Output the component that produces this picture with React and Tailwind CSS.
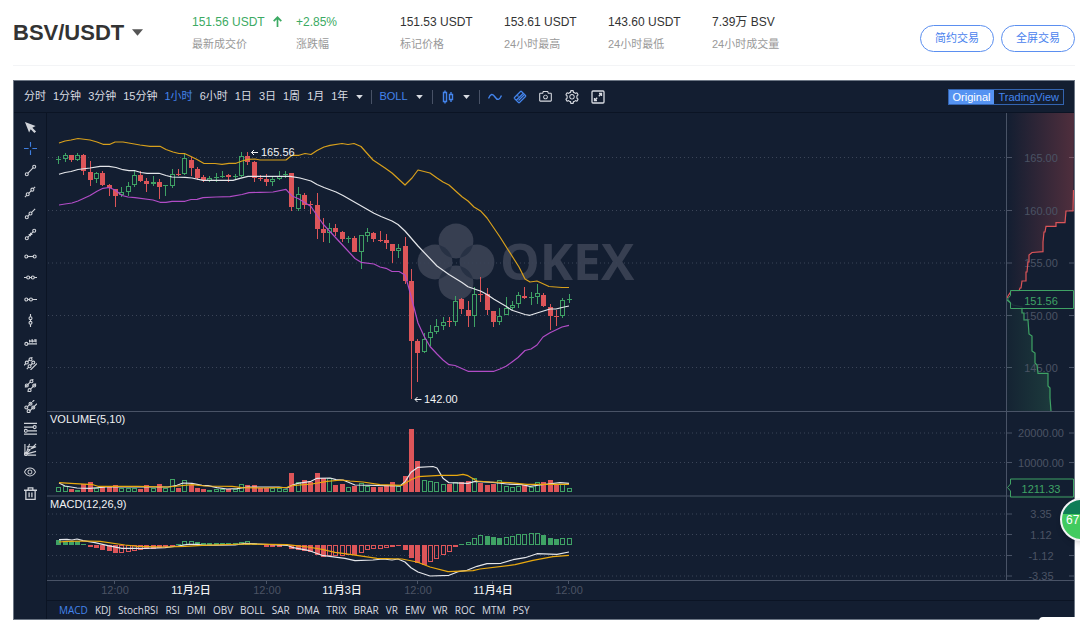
import clsx from 'clsx';
import { AiOutlineCamera, AiOutlineEye, AiOutlineSetting } from 'react-icons/ai';

const stats = [
  { label: '最新成交价', value: '151.56 USDT', up: true, arrow: true },
  { label: '涨跌幅', value: '+2.85%', up: true },
  { label: '标记价格', value: '151.53 USDT' },
  { label: '24小时最高', value: '153.61 USDT' },
  { label: '24小时最低', value: '143.60 USDT' },
  { label: '24小时成交量', value: '7.39万 BSV' },
];

const periods = ['分时', '1分钟', '3分钟', '15分钟', '1小时', '6小时', '1日', '3日', '1周', '1月', '1年'];

const indicators = [
  'MACD', 'KDJ', 'StochRSI', 'RSI', 'DMI', 'OBV', 'BOLL', 'SAR', 'DMA',
  'TRIX', 'BRAR', 'VR', 'EMV', 'WR', 'ROC', 'MTM', 'PSY',
];

const GREEN = '#3fa265';
const RED = '#dd5559';
const AMBER = '#d8a01c';
const PURPLE = '#b14cc6';
const GRID = '#3b4558';
const LINE = '#495366';

// [up, high, body top, body bottom, low]
const candles = [
  [1, 156, 159, 160, 164], [1, 153, 155, 159, 162], [0, 155, 155, 160, 162], [1, 153, 155, 160, 161],
  [0, 154, 155, 171, 175], [0, 161, 172, 180, 186], [1, 172, 173, 179, 183], [0, 171, 173, 185, 186],
  [0, 184, 185, 188, 196], [0, 189, 189, 196, 207], [1, 187, 192, 195, 197], [1, 182, 186, 192, 196],
  [1, 171, 175, 185, 187], [0, 171, 175, 181, 182], [0, 178, 181, 184, 192], [1, 176, 182, 184, 186],
  [0, 179, 182, 187, 199], [1, 185, 185, 186, 196], [1, 169, 174, 186, 188], [0, 169, 174, 175, 176],
  [1, 154, 158, 174, 175], [0, 157, 160, 168, 176], [0, 167, 169, 178, 180], [0, 175, 177, 180, 182],
  [1, 176, 178, 181, 182], [1, 173, 177, 178, 182], [1, 171, 176, 177, 178], [0, 174, 175, 177, 182],
  [1, 174, 176, 177, 179], [1, 152, 156, 176, 177], [0, 152, 156, 162, 165], [0, 161, 162, 178, 182],
  [0, 175, 178, 179, 181], [0, 174, 179, 182, 186], [1, 176, 179, 182, 186], [1, 171, 176, 179, 180],
  [1, 171, 174, 175, 178], [0, 173, 173, 207, 211], [1, 187, 194, 209, 211], [0, 193, 195, 205, 209],
  [0, 201, 204, 205, 214], [0, 193, 205, 229, 239], [0, 218, 229, 233, 242], [1, 223, 228, 233, 243],
  [0, 224, 228, 232, 236], [0, 231, 232, 239, 242], [1, 236, 238, 239, 243], [0, 236, 238, 252, 252],
  [1, 235, 235, 252, 269], [1, 228, 232, 236, 242], [0, 232, 233, 239, 242], [0, 231, 240, 241, 242],
  [0, 234, 240, 243, 249], [0, 244, 244, 251, 263], [1, 244, 248, 251, 258], [0, 237, 246, 281, 284],
  [0, 269, 281, 341, 399], [0, 339, 341, 353, 382], [1, 333, 339, 352, 353], [1, 325, 332, 338, 346],
  [1, 319, 326, 332, 334], [1, 317, 322, 326, 330], [0, 317, 321, 322, 327], [1, 296, 301, 322, 326],
  [0, 298, 299, 309, 314], [0, 301, 310, 316, 327], [1, 287, 294, 316, 327], [0, 277, 294, 295, 302],
  [0, 288, 294, 310, 315], [0, 311, 311, 322, 327], [1, 308, 316, 322, 325], [1, 297, 308, 315, 315],
  [1, 301, 305, 308, 310], [1, 292, 295, 304, 308], [0, 287, 296, 298, 299], [1, 292, 297, 298, 305],
  [1, 284, 293, 297, 304], [0, 293, 295, 306, 307], [0, 304, 307, 316, 330], [0, 310, 316, 317, 326],
  [1, 298, 300, 316, 318], [1, 294, 299, 300, 303],
];

// [up, height]
const volumes = [
  [1, 5], [1, 6], [0, 3], [1, 2], [0, 8], [0, 10], [1, 4], [0, 5], [0, 5], [0, 7], [1, 4], [1, 4], [1, 4],
  [0, 3], [0, 7], [1, 4], [0, 8], [1, 4], [1, 13], [0, 4], [1, 12], [0, 7], [0, 4], [0, 3], [1, 2], [1, 3],
  [1, 3], [0, 3], [1, 3], [1, 8], [0, 7], [0, 7], [0, 4], [0, 4], [1, 4], [1, 4], [1, 3], [0, 19], [1, 10],
  [0, 12], [0, 10], [0, 19], [0, 14], [1, 14], [0, 7], [0, 8], [1, 5], [0, 6], [1, 9], [1, 6], [0, 5],
  [0, 5], [0, 7], [0, 10], [1, 6], [0, 16], [0, 63], [0, 31], [1, 12], [1, 11], [1, 10], [1, 8], [0, 8],
  [1, 10], [0, 10], [0, 11], [1, 14], [0, 9], [0, 7], [0, 8], [1, 12], [1, 6], [1, 5], [1, 6], [0, 7],
  [1, 5], [1, 10], [0, 10], [0, 12], [0, 8], [1, 8], [1, 4],
];

// [value, filled]
const macd = [
  [5, 1], [4, 1], [4, 1], [4, 1], [1, 1], [-2, 1], [-3, 1], [-5, 1], [-6, 1], [-8, 1], [-8, 0], [-7, 0],
  [-6, 0], [-5, 0], [-4, 1], [-4, 1], [-3, 1], [-2, 0], [-1, 1], [1, 1], [4, 0], [4, 0], [3, 1], [2, 1],
  [2, 1], [2, 1], [2, 1], [2, 1], [2, 1], [3, 0], [4, 0], [2, 1], [1, 1], [-2, 1], [-2, 1], [-2, 1], [1, 1],
  [-4, 1], [-5, 1], [-6, 1], [-7, 1], [-10, 1], [-12, 1], [-11, 0], [-11, 0], [-11, 0], [-10, 0], [-10, 1],
  [-8, 0], [-5, 0], [-4, 0], [-4, 0], [-3, 0], [-2, 0], [-1, 1], [-5, 1], [-13, 1], [-18, 1], [-20, 1],
  [-17, 0], [-14, 0], [-10, 0], [-7, 0], [-2, 0], [1, 1], [3, 0], [7, 0], [10, 0], [9, 1], [8, 1], [7, 1],
  [8, 0], [9, 0], [11, 0], [11, 0], [12, 0], [12, 0], [10, 1], [7, 1], [6, 1], [7, 0], [7, 0],
];

const bollUpper =
  '59,143 65,141 71,140 78,138.5 90,140 97,142 103,144.3 110,144.3 115,142 123,142 140,145 150,146.3 160,146.3 166,149.5 173,152 179,153.5 185,153.7 191,156.5 197,159.5 204,163.5 215,163.5 222,164.3 229,163.3 236,163.3 242,161 248,159.3 255,159 260,160 286,160 292,155.3 299,155.3 305,153.5 311,154.5 317,150.5 324,147 330,145.3 342,143.5 348,144.5 354,143.5 361,146.5 373,160 385,168 392,173 405,185 412,178 418,170 430,173 437,178 443,182 449,185 462,196.7 468,201 474,207 481,211.3 487,218 500,237 519,267 525,279 530,282 537,281 549,286.5 562,287.5 569,287.5';
const bollMiddle =
  '59,174.3 65,172.5 71,171.5 78,169.5 90,168 100,166.3 109,166.3 116,167.5 123,169.7 129,170.7 135,170.7 141,172.5 147,173.3 159,173.3 166,175.5 172,177 185,177.3 192,178 203,180.3 233,180.3 240,178.3 248,176.3 290,176.3 300,178 311,181 317,184.5 324,187.5 336,192 343,195.5 374,213.3 381,216.5 392,221 398,224.5 405,231 418,246 437,266 449,274.5 462,282.5 468,286.7 481,291.3 487,294.5 494,299.3 506,306.3 512,310.3 525,314.5 530,315.3 537,313 550,309 556,309 562,307.5 569,306';
const bollLower =
  '59,205 65,204 72,203 78,201 84,198.3 90,195.5 97,191.3 103,188.3 109,187.5 115,190 122,195.5 128,197 135,197.7 153,200 160,202.3 166,202.3 172,201.3 185,201.3 191,199.5 197,199.3 203,197.7 216,197 230,196.7 242,194.5 249,192.7 260,192.3 273,192 286,189.3 292,196 299,199 311,206.5 317,215.5 323,224 342,244.5 355,258.5 361,262.3 374,264 380,267 386,268.3 392,271.5 399,271.5 405,275 408,285 412,300 418,323 424,336 430,346.5 437,354 443,360 449,364.7 455,365.5 468,371.3 494,371.3 500,369 506,366.3 512,362 518,357.5 525,350.5 531,349 537,345 543,337 550,332.7 562,327 569,325.3';

const volumeMa5 =
  '59,483 65,486 77,488 90,488.3 106,487 115,487 150,487 168,487 177,485.3 183,483 192,483.3 202,485.3 208,485.7 217,487.7 227,489 237,488.7 248,487 279,487 287,488 292,485.3 298,483.3 311,481.3 317,478.3 330,478 336,479.7 343,480 355,485 385,485.7 400,486 405,481.7 411,472.3 418,467.3 433,466.5 437,468 443,478.3 449,482.7 468,483.3 475,481.3 493,482.3 507,484 522,484.7 530,486.3 540,485 560,482.7 569,483.3';
const volumeMa10 =
  '59,482.7 75,483.7 93,484.7 98,486.3 138,486.3 168,487 192,484.7 205,486 232,486.3 242,487.7 262,488 287,487.3 292,485.7 312,484 327,481.3 342,480 350,481 363,482 380,484.7 402,485.3 411,479.7 418,476.7 440,475.3 457,475.3 463,474.3 468,475.7 477,481 490,482 510,482.7 527,484.3 569,484.3';
const macdDif =
  '59,539.7 67,539.3 72,540 77,539 83,540.7 95,542.7 108,545.7 122,548.3 145,548.3 165,547.7 178,546 188,544.3 198,544.3 203,545.3 235,545 245,543.3 258,544 287,545.3 292,547.3 308,550.3 322,555.3 345,558.3 355,560.7 373,560 383,559 392,560 398,559 405,562 411,567.7 418,572 430,576 449,575.3 458,571.7 467,570.3 477,566.3 487,563.7 501,563.3 513,559.7 525,557.7 537,553.7 557,554.3 569,552';
const macdDea =
  '59,542 67,541.3 88,541 100,541.3 125,545 138,546.3 165,547 185,546.3 202,545.3 245,544 287,544.7 308,547 322,549.3 335,552.3 350,554.3 377,558.3 402,559 417,562 430,567 448,571.7 473,570.7 480,569 515,564.7 533,560.3 553,556.7 569,555.3';

const asks =
  '1007,298 1008,296 1010,293 1012,291 1019,291 1020,288 1021,288 1022,281 1026,281 1026,272 1027,272 1028,262 1029,262 1029,255 1032,252.5 1043,251.7 1043,242 1044,232 1045,232 1046,226.3 1056,226.3 1056,222.7 1065,222.7 1066,211 1073,211 1073.5,190';
const bids =
  '1007,300 1013,305 1022,307 1022,313 1024,313 1024,320 1028,320 1029,334 1032,336 1032,351 1035,353 1035,363 1037,365 1038,373.3 1048,373.3 1048,386 1050,388 1050,398 1051,411';

const gridRows = [
  [157.5, '165.00'], [210.5, '160.00'], [263, '155.00'], [315.5, '150.00'], [367.5, '145.00'],
  [433, '20000.00'], [462.5, '10000.00'],
  [514, '3.35'], [534.5, '1.12'], [555.5, '-1.12'], [576, '-3.35'],
];

const times = ['12:00', '11月2日', '12:00', '11月3日', '12:00', '11月4日', '12:00'];

const barX = (i) => Math.floor(58.7 + i * 6.3) + 0.5;

function Caret({ className }) {
  return (
    <svg viewBox="0 0 10 6" className={className} fill="currentColor" aria-hidden="true">
      <path d="M0 0h10L5 6z" />
    </svg>
  );
}

function Header() {
  return (
    <header className="flex h-[66px] items-center justify-between border-b border-gray-100">
      <div className="flex items-center">
        <button className="flex w-[179px] items-center gap-2 text-[22px] font-bold text-[#333]">
          BSV/USDT
          <Caret className="w-[11px] h-[7px] text-[#555]" />
        </button>
        <dl className="flex">
          {stats.map((s) => (
            <div key={s.label} className="flex w-[104px] flex-col-reverse gap-1">
              <dt className="text-[11px] leading-[18px] text-[#999]">{s.label}</dt>
              <dd
                className={clsx(
                  'flex items-center gap-2 whitespace-nowrap text-[12px] leading-[18px]',
                  s.up ? 'text-[#3caa63]' : 'text-[#333]'
                )}
              >
                {s.value}
                {s.arrow && (
                  <svg viewBox="0 0 9 11" className="w-[9px] h-[11px]" fill="none" stroke="currentColor" strokeWidth="1.7" aria-hidden="true">
                    <path d="M4.5 11V1.5M.7 5.2l3.8-3.9 3.8 3.9" />
                  </svg>
                )}
              </dd>
            </div>
          ))}
        </dl>
      </div>
      <div className="flex gap-[7px] pt-3">
        <button className="h-[27px] w-[74px] rounded-full border border-[#5b8ff0] text-[11px] text-[#4a82ee]">简约交易</button>
        <button className="h-[27px] w-[74px] rounded-full border border-[#5b8ff0] text-[11px] text-[#4a82ee]">全屏交易</button>
      </div>
    </header>
  );
}

function Divider() {
  return <span className="h-[14px] w-px bg-[#485266]" />;
}

function Toolbar() {
  return (
    <div className="flex h-8 items-center justify-between border-b border-[#0b1424] px-[10px] text-[11px] text-[#d9dce2]">
      <div className="flex items-center">
        <div className="flex items-center gap-[7px]">
          {periods.map((p) => (
            <button key={p} className={p === '1小时' ? 'text-[#4384ec]' : ''}>{p}</button>
          ))}
          <button aria-label="更多周期" className="px-px"><Caret className="h-1 w-[7px]" /></button>
        </div>
        <div className="ml-[7px] flex items-center gap-[7px]">
          <Divider />
          <button className="flex items-center gap-2 text-[#4384ec]">
            BOLL
            <Caret className="h-1 w-[7px] text-[#d9dce2]" />
          </button>
        </div>
        <div className="ml-[9px] flex items-center gap-[9px]">
          <Divider />
          <button aria-label="图表类型" className="flex items-center gap-[9px]">
            <svg viewBox="0 0 12 14" className="w-3 h-[14px]" fill="none" stroke="#4384ec" strokeWidth="1.4">
              <path d="M1.5 2.5h3v9h-3zM3 .5v2M3 11.5v2M7.5 4.5h3v5h-3zM9 2v2.500M9 9.5V12" />
            </svg>
            <Caret className="h-1 w-[7px]" />
          </button>
          <Divider />
        </div>
        <div className="ml-2 flex items-center gap-[11px]">
          <button aria-label="指标">
            <svg viewBox="0 0 14 14" className="size-[14px]" fill="none" stroke="#4384ec" strokeWidth="1.4">
              <path d="M.5 8.5C2.5 3.5 4.7 3.5 7 7s4.500 3.300 6.500-1.500" />
            </svg>
          </button>
          <button aria-label="画线">
            <svg viewBox="0 0 14 14" className="size-[14px]" fill="none" stroke="#4384ec" strokeWidth="1.2">
              <path d="M1 8 8 1M8 1l5 5M13 6l-7 7M6 13 1 8M3.500 10l6.500-6.500M5.500 10.500l5.500-5.500M4 5l1.500 1.500" />
            </svg>
          </button>
          <button aria-label="截图"><AiOutlineCamera className="size-[15px]" /></button>
          <button aria-label="设置"><AiOutlineSetting className="size-4" /></button>
          <button aria-label="全屏">
            <svg viewBox="0 0 14 14" className="size-[14px]" fill="none" stroke="currentColor" strokeWidth="1.3">
              <rect x="1" y="1" width="12" height="12" rx="1" />
              <path d="M8 3.5h2.500V6M10.500 3.500 7.800 6.200M6 10.500H3.500V8M3.500 10.500l2.700-2.700" />
            </svg>
          </button>
        </div>
      </div>
      <div className="flex h-4 items-stretch border border-[#3364b0] leading-[14px]">
        <button className="bg-[#5593f2] px-1 text-white">Original</button>
        <button className="px-1 text-[#4384ec]">TradingView</button>
      </div>
    </div>
  );
}

const tools = [
  { name: '趋势线', d: 'M4 10l6-6', dots: [[3, 11], [11, 3]] },
  { name: '直线', d: 'M1 13l2-2M5 9l3-3M10 4l2-2', dots: [[4, 10], [9, 5]] },
  { name: '射线', d: 'M4 10l2-2M8 6l4-4', dots: [[3, 11], [7, 7]] },
  { name: '箭头', d: 'M4 10l6-6M5 7h4M7 5v4', dots: [[3, 11], [11, 3]] },
  { name: '水平线段', d: 'M4 7h6', dots: [[2.5, 7], [11.5, 7]] },
  { name: '水平直线', d: 'M0 7h3M6 7h2M11 7h3', dots: [[4.5, 7], [9.5, 7]] },
  { name: '水平射线', d: 'M4 7h2M9 7h5', dots: [[2.5, 7], [7.5, 7]] },
  { name: '垂直线', d: 'M7 0v3M7 6v2M7 11v3', dots: [[7, 4.5], [7, 9.5]] },
  { name: '价格线', d: 'M4 8.5h10M6 4v3M8 4h1v3M11 4h2v3M6 5.5h7', dots: [[2.5, 8.5]] },
  { name: '价格通道线', d: 'M0 9l2-2M4 5l2-2M8 1l1-1M3 13l2-2M7 9l2-2M7 14l7-7', dots: [[3, 6], [7, 2.5], [6, 10], [10, 6]] },
  { name: '平行直线', d: 'M1 9l6-6M9 1l1-1M4 14l1-1M7 11l6-6', dots: [[3, 7], [8, 2.5], [6, 12], [11, 7]] },
  { name: '平行射线', d: 'M3 8l5-5M9 2l2-2M6 12l8-8', dots: [[2.5, 8], [7, 4], [5, 12], [10, 8]] },
  { name: '斐波那契回调', d: 'M0 1.5h14M0 5.5h10M4 9.5h10M0 13h14', dots: [[11.5, 5.5], [2, 9.5]] },
  { name: '斐波那契扇形', d: 'M1 1v12M2 12 13 9M2 12 13 1M2 12 6 1M3 4h10M3 8l10-4M4 13h9', dots: [[2, 12]] },
];

function ToolButton({ name, children }) {
  return (
    <button aria-label={name} className="block">
      <svg viewBox="0 0 14 14" className="size-[13px]" fill="none" stroke="currentColor" strokeWidth="1.2">
        {children}
      </svg>
    </button>
  );
}

function DrawingTools() {
  return (
    <aside className="flex w-[33px] shrink-0 flex-col items-center justify-between border-r border-[#0b1424] pt-2 pb-[119px] text-[#d0d3d9]">
      <ToolButton name="选择">
        <path d="M1 1 12.500 5.500 9 7.200l4 4-1.800 1.800-4-4L5.500 12.500z" fill="currentColor" stroke="none" />
      </ToolButton>
      <ToolButton name="十字线">
        <path d="M7 0v5M7 9v5M0 7h5M9 7h5" stroke="#3f7fe0" />
      </ToolButton>
      {tools.map((t) => (
        <ToolButton key={t.name} name={t.name}>
          <path d={t.d} />
          {t.dots.map(([x, y]) => (
            <circle key={`${x}-${y}`} cx={x} cy={y} r="1.6" />
          ))}
        </ToolButton>
      ))}
      <button aria-label="显示"><AiOutlineEye className="size-[14px]" /></button>
      <ToolButton name="删除">
        <path d="M0 3.500h14M4.500 3.500v-2.500h5v2.500M2 3.500v9.800h10V3.500M5.500 6v5M8.500 6v5" strokeWidth="1.4" />
      </ToolButton>
    </aside>
  );
}

function Candle({ x, data }) {
  const [up, high, top, bottom, low] = data;
  const color = up ? GREEN : RED;
  if (bottom - top < 2) {
    return <path d={`M${x} ${high}V${low}M${x - 2.5} ${top + 0.5}h5`} stroke={color} />;
  }
  return (
    <g stroke={color}>
      <path d={`M${x} ${high}V${top}M${x} ${bottom}V${low}`} />
      {up ? (
        <rect x={x - 2} y={top + 0.5} width="4" height={bottom - top - 1} fill="none" />
      ) : (
        <rect x={x - 2.5} y={top} width="5" height={bottom - top} fill={RED} stroke="none" />
      )}
    </g>
  );
}

function Bar({ x, y, height, color, filled }) {
  if (filled || height < 3) {
    return <rect x={x - 2.5} y={y} width="5" height={height} fill={color} />;
  }
  return <rect x={x - 2} y={y + 0.5} width="4" height={height - 1} fill="none" stroke={color} />;
}

function Watermark() {
  return (
    <g fill="#373f51">
      <clipPath id="petals">
        <circle cx="456" cy="241" r="17.4" />
        <circle cx="456" cy="283" r="17.4" />
      </clipPath>
      <circle cx="456" cy="241" r="17.4" />
      <circle cx="456" cy="283" r="17.4" />
      <circle cx="435" cy="262" r="17.4" />
      <circle cx="477" cy="262" r="17.4" />
      <g clipPath="url(#petals)" fill="#273144">
        <circle cx="435" cy="262" r="17.4" />
        <circle cx="477" cy="262" r="17.4" />
      </g>
      <text x="500" y="280" fontSize="50" fontWeight="700" className="font-['Open_Sans',sans-serif]">OKEX</text>
    </g>
  );
}

function PriceTag({ y, value }) {
  return (
    <g>
      <path
        d={`M1010.500 ${y - 9}h63v18h-63v-6l-3-3.500 3-3.500z`}
        fill="#131e31"
        fillOpacity="0.85"
        stroke={GREEN}
      />
      <text x="1041" y={y + 5} fill={GREEN} textAnchor="middle">{value}</text>
    </g>
  );
}

function Chart() {
  return (
    <svg viewBox="47 113 1027 487" className="block w-full" fontSize="11" role="img" aria-label="BSV/USDT">
      <defs>
        <linearGradient id="askFill" gradientUnits="userSpaceOnUse" x1="1007" x2="1074" y1="0" y2="0">
          <stop offset="0" stopColor={RED} stopOpacity="0" />
          <stop offset="1" stopColor={RED} stopOpacity="0.3" />
        </linearGradient>
        <linearGradient id="bidFill" gradientUnits="userSpaceOnUse" x1="1007" x2="1074" y1="0" y2="0">
          <stop offset="0" stopColor={GREEN} stopOpacity="0.04" />
          <stop offset="1" stopColor={GREEN} stopOpacity="0.3" />
        </linearGradient>
      </defs>

      <Watermark />

      {gridRows.map(([y, label]) => (
        <g key={label}>
          <path d={`M48 ${y}H1006`} stroke={GRID} strokeDasharray="1 3" />
          <path d={`M1007 ${y}h5M1069 ${y}h5`} stroke={LINE} />
        </g>
      ))}

      <polygon points={`1007,113 ${asks} 1074,113`} fill="url(#askFill)" />
      <polygon points={`${bids} 1007,411`} fill="url(#bidFill)" />
      {gridRows.map(([y, label]) => (
        <text key={label} x="1041" y={y + 4} fill="#4b5364" textAnchor="middle">{label}</text>
      ))}
      <polyline points={asks} fill="none" stroke={RED} strokeWidth="1.2" />
      <polyline points={bids} fill="none" stroke={GREEN} strokeWidth="1.2" />

      <path d="M47 411.500H1074M47 496H1074M47 580.500H1074M1006.500 113V580" stroke={LINE} />

      {candles.map((c, i) => (
        <Candle key={i} x={barX(i)} data={c} />
      ))}
      <g fill="none" strokeWidth="1.2" strokeLinejoin="round">
        <polyline points={bollUpper} stroke={AMBER} />
        <polyline points={bollMiddle} stroke="#e4e6ea" />
        <polyline points={bollLower} stroke={PURPLE} />
      </g>

      {volumes.map(([up, h], i) => (
        <Bar key={i} x={barX(i)} y={492 - h} height={h} color={up ? GREEN : RED} filled={!up} />
      ))}
      {macd.map(([v, filled], i) => (
        <Bar
          key={i}
          x={barX(i)}
          y={v > 0 ? 545 - v : 545}
          height={Math.abs(v)}
          color={v > 0 ? GREEN : RED}
          filled={filled}
        />
      ))}
      <g fill="none" strokeWidth="1.2" strokeLinejoin="round">
        <polyline points={volumeMa5} stroke="#e4e6ea" />
        <polyline points={volumeMa10} stroke="#e9a90f" />
        <polyline points={macdDif} stroke="#e4e6ea" />
        <polyline points={macdDea} stroke="#e9a90f" />
      </g>

      <g fill="#f1f2f4">
        <path d="M251.500 152.500h6.500M254 150l-2.500 2.500L254 155M415 399.500h6.500M417.500 397l-2.500 2.500 2.500 2.500" fill="none" stroke="#f1f2f4" />
        <text x="261" y="156">165.56</text>
        <text x="424" y="403">142.00</text>
        <text x="50" y="423">VOLUME(5,10)</text>
        <text x="50" y="508">MACD(12,26,9)</text>
      </g>

      {times.map((t, i) => {
        const x = Math.round(115.4 + i * 75.6);
        return (
          <g key={x}>
            <path d={`M${x - 0.5} 581v3`} stroke={LINE} />
            <text
              x={x}
              y="594"
              textAnchor="middle"
              fill={t === '12:00' ? '#4b5364' : '#f1f2f4'}
              fontWeight={t === '12:00' ? 400 : 500}
            >
              {t}
            </text>
          </g>
        );
      })}

      <PriceTag y={299.5} value="151.56" />
      <PriceTag y={488} value="1211.33" />
    </svg>
  );
}

export default function App() {
  return (
    <div className="relative min-h-screen overflow-hidden bg-white pl-[13px] pr-[5px] font-['Liberation_Sans','Noto_Sans_CJK_SC',sans-serif]">
      <Header />
      <main className="mt-[14px] border border-[#6d7785] bg-[#131e31]">
        <Toolbar />
        <div className="flex">
          <DrawingTools />
          <div className="min-w-0 flex-1">
            <Chart />
            <nav className="flex h-[19px] items-center gap-[7px] border-t border-[#0b1424] pl-3 font-['Open_Sans',sans-serif] text-[10px] font-medium text-[#d9dce2]">
              {indicators.map((name) => (
                <button key={name} className={name === 'MACD' ? 'text-[#4384ec]' : ''}>{name}</button>
              ))}
            </nav>
          </div>
        </div>
      </main>

      <button
        aria-label="67%"
        className="absolute top-[498px] -right-[23px] flex size-[43px] items-center overflow-hidden rounded-full border-2 border-gray-100 bg-linear-to-b from-[#0f7d56] from-35% to-[#41cb5f] to-35% pl-1 text-[12px] text-white shadow-md"
      >
        67
      </button>
      <div className="absolute right-0 bottom-0 h-[5px] w-[41px] rounded-tl bg-white" />
    </div>
  );
}
